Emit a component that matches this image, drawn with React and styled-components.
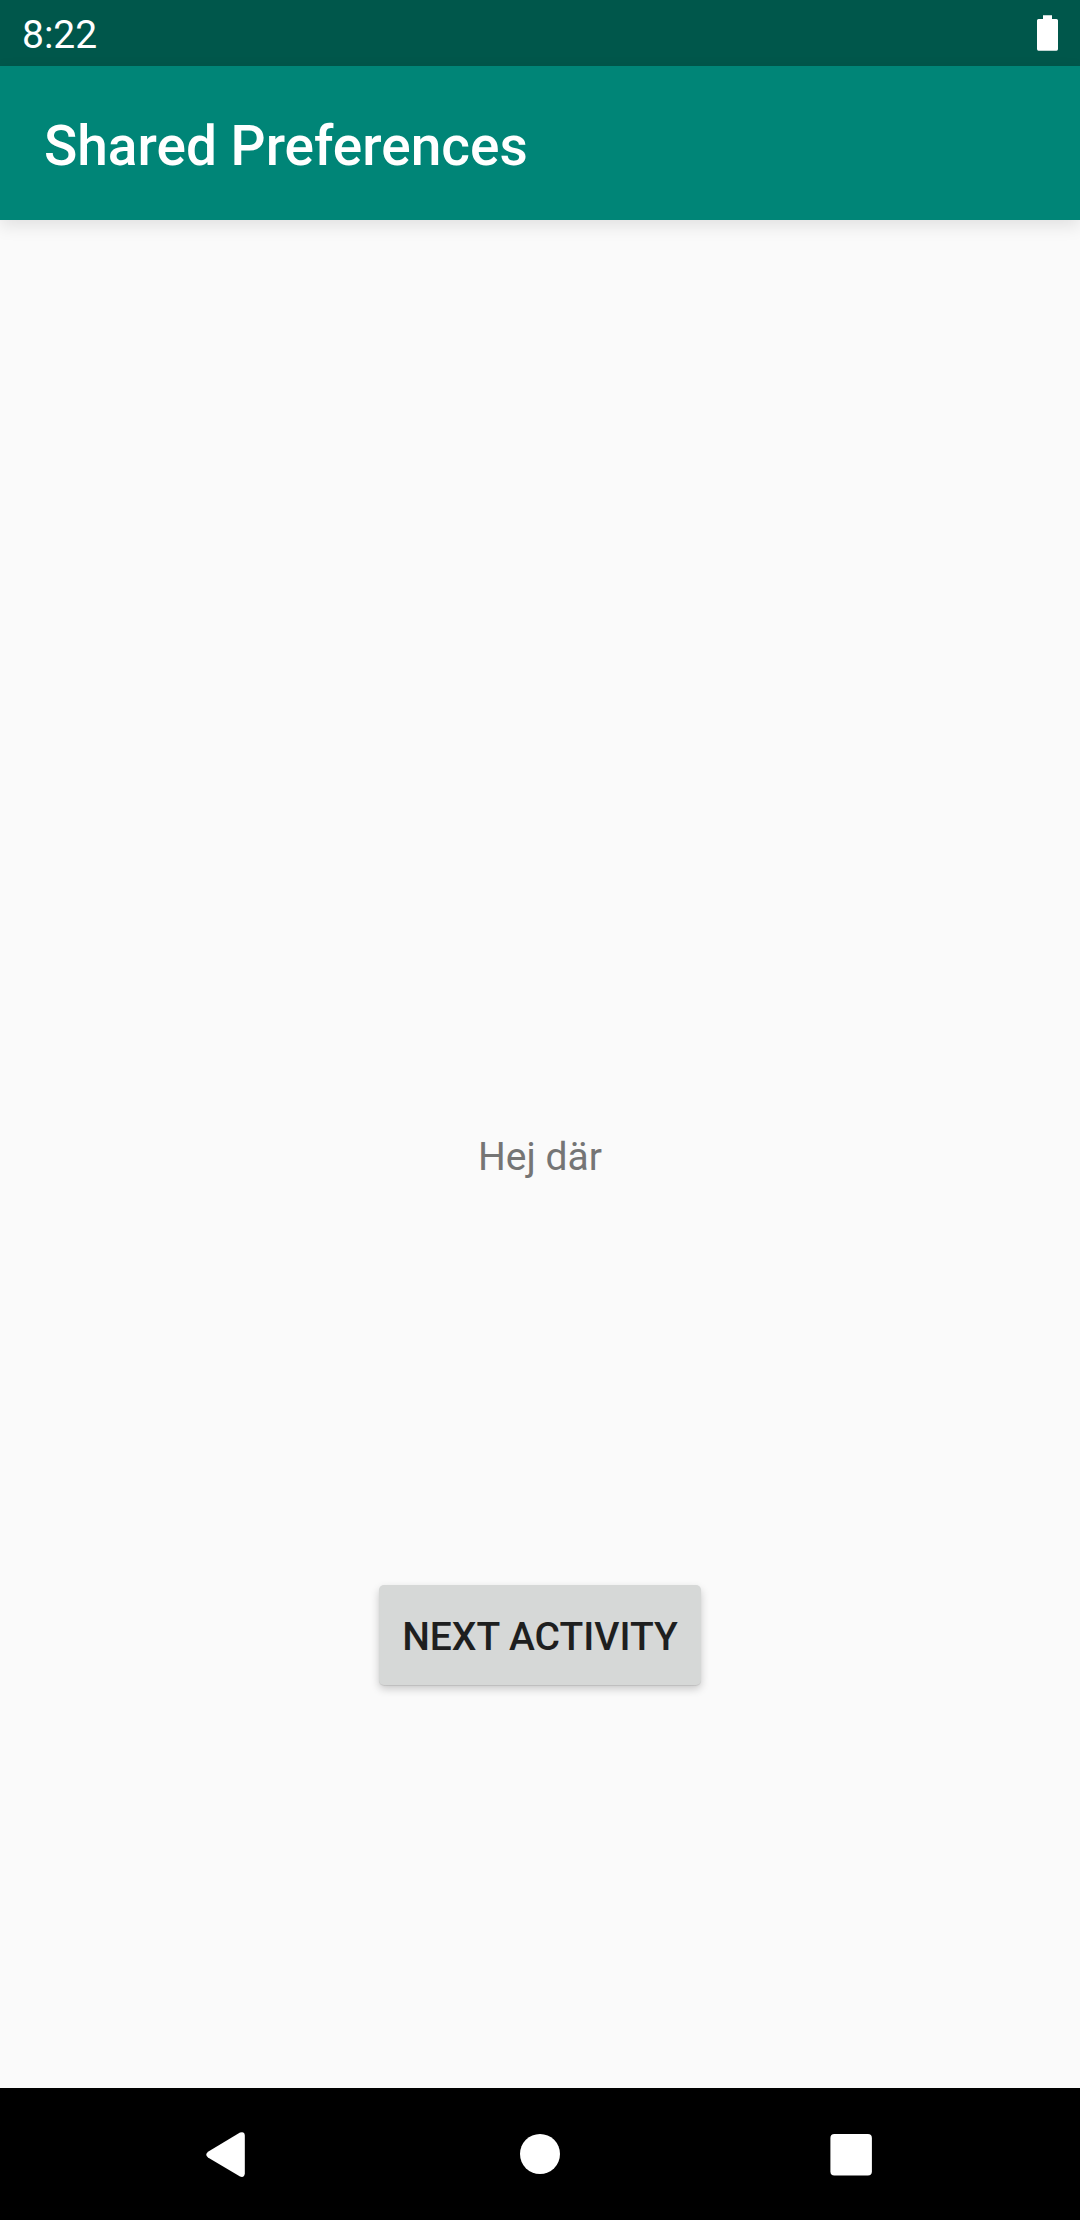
import React from "react";
import styled, { createGlobalStyle } from "styled-components";

const GlobalStyle = createGlobalStyle`
  * { box-sizing: border-box; }
  body {
    margin: 0;
    background: #fafafa;
    font-family: Roboto, "Liberation Sans", sans-serif;
  }
`;

const Screen = styled.div`
  min-height: 100vh;
  display: flex;
  flex-direction: column;
`;

const StatusBar = styled.div`
  height: 66px;
  padding: 0 22px;
  display: flex;
  align-items: center;
  justify-content: space-between;
  background: #00574b;
`;

const Clock = styled.time`
  padding-top: 4px;
  color: #fff;
  font-size: 39px;
  line-height: 48px;
`;

const AppBar = styled.header`
  height: 154px;
  padding: 0 44px;
  display: flex;
  align-items: center;
  background: #008577;
  box-shadow: 0 6px 16px rgba(0, 0, 0, 0.1);
`;

const Title = styled.h1`
  margin: 0;
  padding-top: 6px;
  color: #fff;
  font-size: 55px;
  font-weight: 500;
  line-height: 64px;
`;

const Content = styled.main`
  flex: 1;
  display: grid;
  grid-template-rows: 1fr auto 1fr;
  place-items: center;
`;

const Message = styled.p`
  grid-row: 2;
  margin: 0;
  padding-top: 6px;
  color: #757575;
  font-size: 39px;
  line-height: 48px;
`;

const RaisedButton = styled.button`
  grid-row: 3;
  height: 100px;
  padding: 4px 23px 0;
  border: 0;
  border-radius: 5px;
  background: #d6d8d7;
  color: #1e1f1f;
  font: 500 39px/48px Roboto, "Liberation Sans", sans-serif;
  text-transform: uppercase;
  box-shadow: 0 4px 8px rgba(0, 0, 0, 0.2), 0 1px 1px rgba(0, 0, 0, 0.1);
  cursor: pointer;
`;

const NavBar = styled.nav`
  height: 132px;
  padding: 0 7%;
  display: flex;
  background: #000;
`;

const NavButton = styled.button`
  flex: 1;
  display: flex;
  align-items: center;
  justify-content: center;
  padding: 0;
  border: 0;
  background: none;
  color: #fff;
  cursor: pointer;
`;

const NavIcon = styled.svg`
  width: 66px;
  height: 66px;
  fill: currentColor;
`;

const BatteryIcon = styled.svg`
  width: 22px;
  height: 36px;
  fill: #fff;
`;

const navItems = [
  {
    label: "Back",
    shape: (
      <path d="M11 30.7 L43 11.6 Q47.5 10 47.8 14.5 V52.5 Q47.5 57 43 55.6 L11 36.5 Q7.5 33.6 11 30.7 Z" />
    ),
  },
  { label: "Home", shape: <circle cx="33" cy="33" r="20" /> },
  {
    label: "Recent apps",
    shape: <rect x="13.4" y="13" width="41.5" height="41.5" rx="4" />,
  },
];

export default function App() {
  return (
    <>
      <GlobalStyle />
      <Screen>
        <StatusBar>
          <Clock>8:22</Clock>
          <BatteryIcon viewBox="0 0 22 36" role="img" aria-label="Battery full">
            <path d="M7 0.3 H16 V4 H20.5 Q22 4 22 5.5 V34 Q22 35.7 20.5 35.7 H2.5 Q1 35.7 1 34 V5.5 Q1 4 2.5 4 H7 Z" />
          </BatteryIcon>
        </StatusBar>
        <AppBar>
          <Title>Shared Preferences</Title>
        </AppBar>
        <Content>
          <Message>Hej där</Message>
          <RaisedButton type="button">Next activity</RaisedButton>
        </Content>
        <NavBar aria-label="System">
          {navItems.map(({ label, shape }) => (
            <NavButton key={label} type="button" aria-label={label}>
              <NavIcon viewBox="0 0 66 66" aria-hidden="true">
                {shape}
              </NavIcon>
            </NavButton>
          ))}
        </NavBar>
      </Screen>
    </>
  );
}
